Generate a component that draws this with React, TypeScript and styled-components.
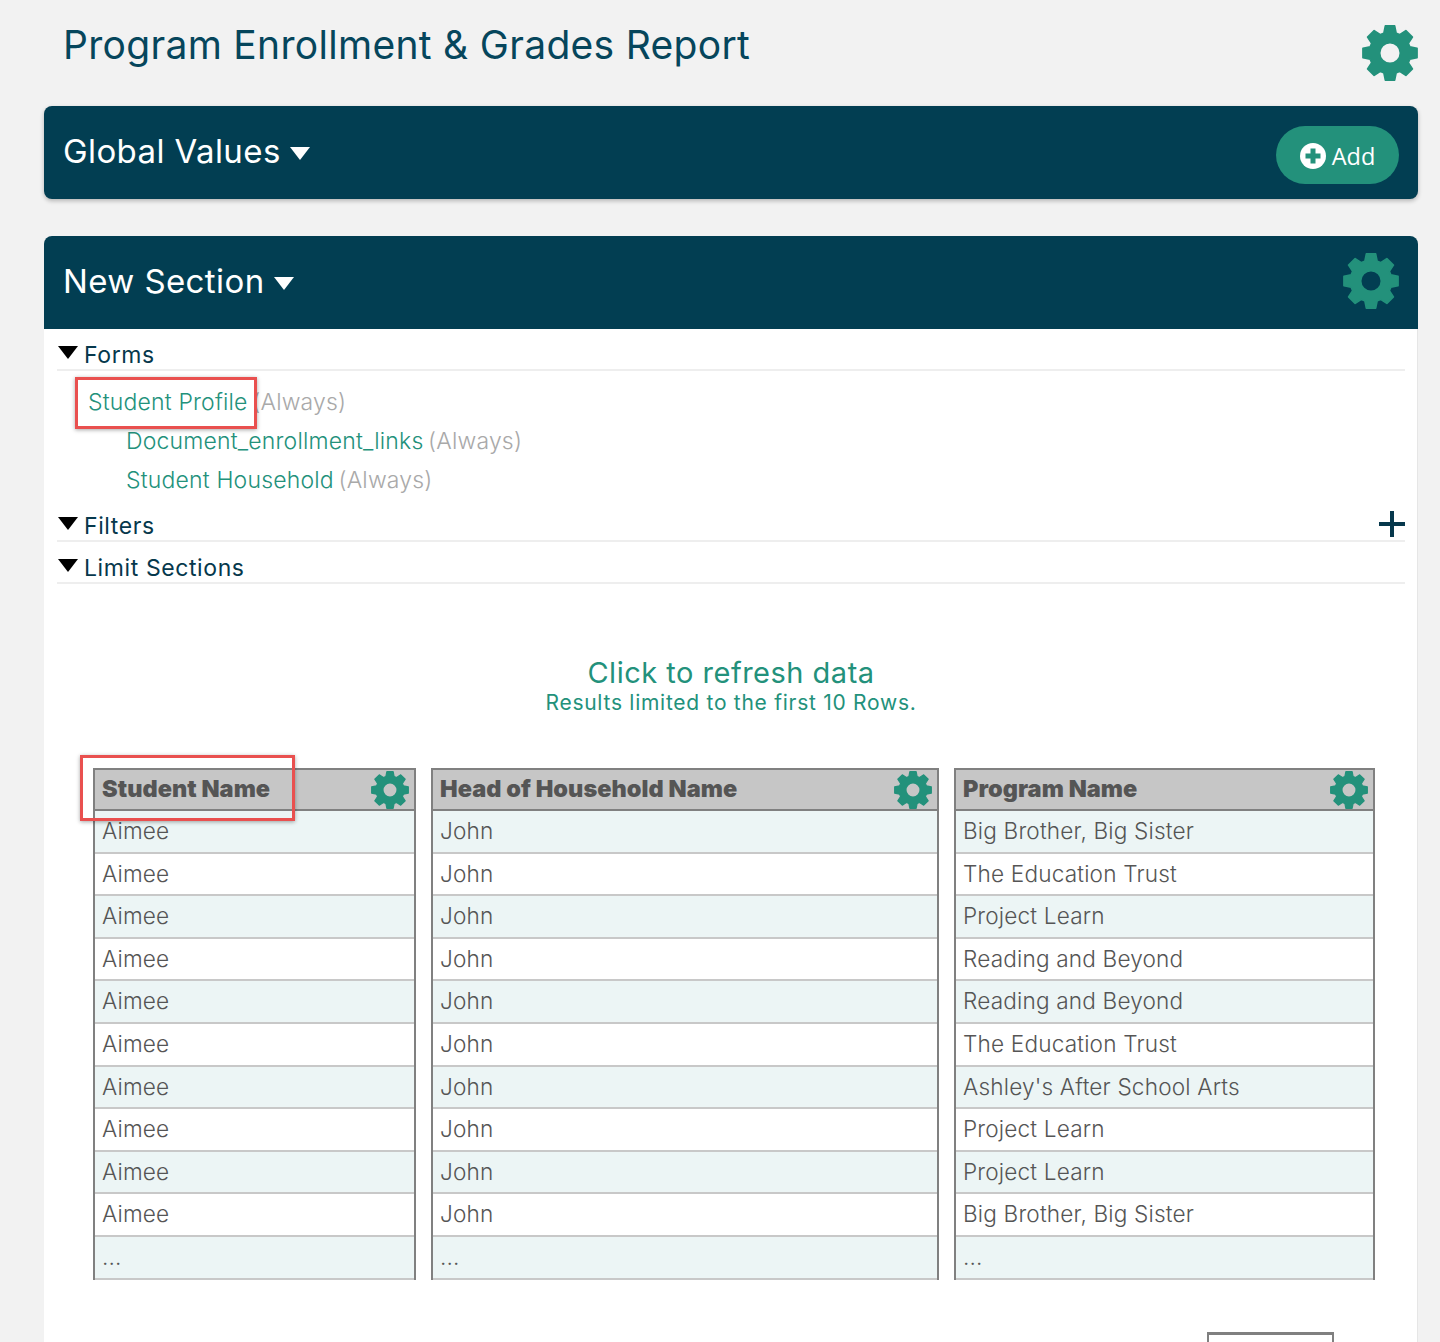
import React from "react";
import styled, { createGlobalStyle } from "styled-components";

const Global = createGlobalStyle`
  html, body { margin: 0; padding: 0; background: #f2f2f2; }
  body { font-family: "Inter", "Liberation Sans", sans-serif; }
  * { box-sizing: border-box; }
`;

const Page = styled.div`
  width: 1440px;
  height: 1342px;
  overflow: hidden;
  padding: 0 22px 0 44px;
  display: flex;
  flex-direction: column;
`;
const TitleRow = styled.header`
  height: 106px;
  padding: 22px 0 0 19px;
  display: flex;
  justify-content: space-between;
  align-items: flex-start;
`;
const Title = styled.h1`
  margin: 0;
  font-size: 39px;
  line-height: 46px;
  font-weight: 400;
  letter-spacing: 0.3px;
  color: #06465c;
`;
const TopGear = styled.div`
  margin-top: 3px;
  display: flex;
`;
const Bar = styled.div<{ $rounded?: boolean }>`
  height: 93px;
  background: #023e52;
  border-radius: ${(p) => (p.$rounded ? "8px" : "8px 8px 0 0")};
  box-shadow: ${(p) => (p.$rounded ? "0 2px 4px rgba(0,0,0,.25)" : "none")};
  padding: 0 19px 0 19px;
  display: flex;
  align-items: center;
  justify-content: space-between;
`;
const BarTitle = styled.div`
  display: flex;
  align-items: center;
  gap: 9px;
  color: #fff;
  font-size: 33px;
  line-height: 40px;
  letter-spacing: 0.4px;
  margin-top: -3px;
`;
const Caret = styled.svg`
  width: 20px;
  height: 13px;
  margin-top: 4px;
`;
const AddButton = styled.button`
  width: 123px;
  height: 58px;
  margin-top: 5px;
  border: 0;
  border-radius: 29px;
  background: #23917b;
  color: #fff;
  display: flex;
  align-items: center;
  justify-content: center;
  gap: 6px;
  font: 400 23.5px "Open Sans", sans-serif;
  padding: 2px 0 0;
`;
const AddIcon = styled.svg`
  width: 26px;
  height: 26px;
  margin-top: -1px;
`;
const Section = styled.section`
  margin-top: 37px;
  flex: 1;
  display: flex;
  flex-direction: column;
`;
const SectionGear = styled.div`
  margin-top: -4px;
  display: flex;
`;
const SectionBody = styled.div`
  position: relative;
  flex: 1;
  background: #fff;
  border-right: 1px solid #e6e6e6;
  padding: 0 12px 0 13px;
`;
const GroupRow = styled.div<{ $height: number }>`
  height: ${(p) => p.$height}px;
  border-bottom: 2px solid #eeeeee;
  display: flex;
  align-items: flex-end;
  gap: 6px;
  color: #06384c;
  font-size: 23px;
  line-height: 28px;
  letter-spacing: 0.6px;
  position: relative;
`;
const GroupCaret = styled.svg`
  width: 20px;
  height: 13px;
  align-self: flex-end;
  margin-bottom: 10px;
  margin-left: 1px;
`;
const PlusIcon = styled.svg`
  position: absolute;
  right: 0;
  bottom: 3px;
  width: 26px;
  height: 26px;
`;
const Links = styled.div`
  display: flex;
  flex-direction: column;
  padding-top: 12px;
  height: 129px;
`;
const LinkRow = styled.div<{ $indent: number }>`
  height: 39px;
  line-height: 38px;
  padding-left: ${(p) => p.$indent}px;
  font-size: 23px;
  font-weight: 300;
  letter-spacing: 0.18px;
  white-space: nowrap;
`;
const LinkName = styled.a`
  color: #23917b;
`;
const Muted = styled.span`
  color: #a9a9a9;
  margin-left: -2px;
`;
const Highlight = styled.div<{ $top: number; $left: number; $w: number; $h: number }>`
  position: absolute;
  top: ${(p) => p.$top}px;
  left: ${(p) => p.$left}px;
  width: ${(p) => p.$w}px;
  height: ${(p) => p.$h}px;
  border: 3px solid #e9504f;
  box-shadow: 0 1px 4px rgba(0, 0, 0, 0.35);
  z-index: 2;
`;
const Refresh = styled.div`
  margin-top: 71px;
  text-align: center;
  color: #23917b;
`;
const RefreshTitle = styled.div`
  font-size: 29px;
  line-height: 36px;
  letter-spacing: 0.5px;
`;
const RefreshNote = styled.div`
  font-size: 21px;
  line-height: 24px;
  letter-spacing: 0.73px;
`;
const Tables = styled.div`
  margin: 53px 0 0 36px;
  display: grid;
  grid-template-columns: 323px 508px 421px;
  gap: 15px;
`;
const Column = styled.div`
  border-left: 2px solid #808080;
  border-right: 2px solid #808080;
`;
const HeadCell = styled.div`
  height: 43px;
  background: #c6c6c6;
  border-top: 2px solid #808080;
  border-bottom: 2px solid #808080;
  display: flex;
  align-items: center;
  justify-content: space-between;
  padding: 0 5px 0 7px;
  color: #555;
  font-size: 23.5px;
  font-weight: 900;
  letter-spacing: 0.05px;
`;
const HeadLabel = styled.span`
  margin-top: -2px;
`;
const Cell = styled.div<{ $odd: boolean }>`
  height: 42.6px;
  background: ${(p) => (p.$odd ? "#ecf5f5" : "#fff")};
  border-bottom: 2px solid #c8c8c8;
  padding: 0 7px;
  color: #555;
  font-size: 22.6px;
  font-weight: 300;
  letter-spacing: 0.17px;
  line-height: 40px;
  white-space: nowrap;
`;
const BottomBox = styled.div`
  position: absolute;
  top: 1003px;
  left: 1163px;
  width: 127px;
  height: 60px;
  border: 2px solid #808080;
  border-top-width: 3px;
  background: #fff;
`;

function gearPath(): string {
  const teeth = 8;
  const pts: string[] = [];
  for (let i = 0; i < teeth; i++) {
    const a = (i * 2 * Math.PI) / teeth - Math.PI / 2;
    const pitch = (2 * Math.PI) / teeth;
    const at = (r: number, d: number) =>
      `${(50 + r * Math.cos(a + d)).toFixed(2)} ${(50 + r * Math.sin(a + d)).toFixed(2)}`;
    pts.push(
      at(37, -pitch / 2 + 0.08),
      at(37, -0.3),
      at(49, -0.17),
      at(49, 0.17),
      at(37, 0.3),
      at(37, pitch / 2 - 0.08),
    );
  }
  const hole = "M50 33a17 17 0 1 0 0 34a17 17 0 1 0 0-34Z";
  return `M${pts.join("L")}Z${hole}`;
}
const GEAR = gearPath();

const GearSvg = styled.svg<{ $size: number }>`
  width: ${(p) => p.$size}px;
  height: ${(p) => p.$size}px;
  flex: none;
`;
const Gear = ({ size }: { size: number }) => (
  <GearSvg $size={size} viewBox="0 0 100 100">
    <path d={GEAR} fill="#23917b" fillRule="evenodd" />
    <path d={GEAR.split("Z")[0] + "Z"} fill="none" stroke="#23917b" strokeWidth="3" strokeLinejoin="round" />
  </GearSvg>
);
const WhiteCaret = () => (
  <Caret viewBox="0 0 20 13"><path d="M0 0H20L10 13Z" fill="#fff" /></Caret>
);
const BlackCaret = () => (
  <GroupCaret viewBox="0 0 20 13"><path d="M0 0H20L10 13Z" fill="#000" /></GroupCaret>
);

const columns = [
  { head: "Student Name", cells: Array(10).fill("Aimee") },
  { head: "Head of Household Name", cells: Array(10).fill("John") },
  {
    head: "Program Name",
    cells: [
      "Big Brother, Big Sister",
      "The Education Trust",
      "Project Learn",
      "Reading and Beyond",
      "Reading and Beyond",
      "The Education Trust",
      "Ashley's After School Arts",
      "Project Learn",
      "Project Learn",
      "Big Brother, Big Sister",
    ],
  },
];

export default function App() {
  return (
    <Page>
      <Global />
      <TitleRow>
        <Title>Program Enrollment &amp; Grades Report</Title>
        <TopGear><Gear size={56} /></TopGear>
      </TitleRow>
      <Bar $rounded>
        <BarTitle>Global Values <WhiteCaret /></BarTitle>
        <AddButton>
          <AddIcon viewBox="0 0 26 26">
            <circle cx="13" cy="13" r="13" fill="#fff" />
            <path d="M10.5 5.5h5v5h5v5h-5v5h-5v-5h-5v-5h5Z" fill="#23917b" />
          </AddIcon>
          Add
        </AddButton>
      </Bar>
      <Section>
        <Bar>
          <BarTitle>New Section <WhiteCaret /></BarTitle>
          <SectionGear><Gear size={56} /></SectionGear>
        </Bar>
        <SectionBody>
          <GroupRow $height={42}><BlackCaret />Forms</GroupRow>
          <Links>
            <LinkRow $indent={31}><LinkName>Student Profile</LinkName> <Muted>(Always)</Muted></LinkRow>
            <LinkRow $indent={69}><LinkName>Document_enrollment_links</LinkName> <Muted>(Always)</Muted></LinkRow>
            <LinkRow $indent={69}><LinkName>Student Household</LinkName> <Muted>(Always)</Muted></LinkRow>
          </Links>
          <GroupRow $height={42}>
            <BlackCaret />Filters
            <PlusIcon viewBox="0 0 26 26"><path d="M13 0V26M0 13H26" stroke="#06384c" strokeWidth="4" /></PlusIcon>
          </GroupRow>
          <GroupRow $height={42}><BlackCaret />Limit Sections</GroupRow>
          <Refresh>
            <RefreshTitle>Click to refresh data</RefreshTitle>
            <RefreshNote>Results limited to the first 10 Rows.</RefreshNote>
          </Refresh>
          <Tables>
            {columns.map((c) => (
              <Column key={c.head}>
                <HeadCell><HeadLabel>{c.head}</HeadLabel><Gear size={38} /></HeadCell>
                {[...c.cells, "..."].map((t, i) => (
                  <Cell key={i} $odd={i % 2 === 0}>{t}</Cell>
                ))}
              </Column>
            ))}
          </Tables>
          <Highlight $top={48} $left={31} $w={182} $h={52} />
          <Highlight $top={426} $left={36} $w={215} $h={66} />
          <BottomBox />
        </SectionBody>
      </Section>
    </Page>
  );
}
